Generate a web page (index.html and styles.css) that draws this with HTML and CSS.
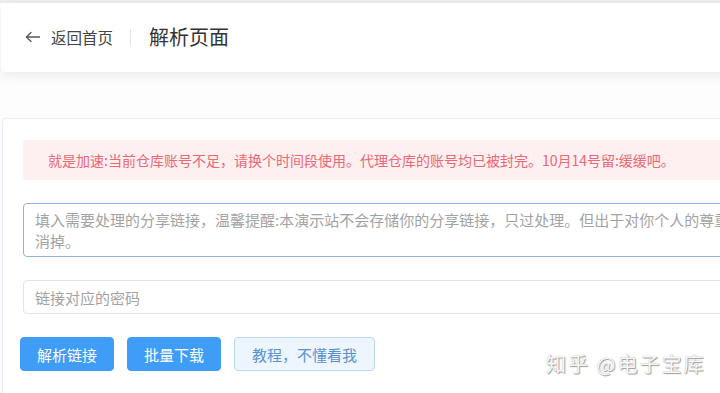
FILE: index.html
```html
<!DOCTYPE html>
<html lang="zh-CN">
<head>
<meta charset="utf-8">
<title>解析页面</title>
<link rel="stylesheet" href="styles.css">
</head>
<body>
<div class="page">
  <header class="page-header">
    <a class="back">
      <svg class="back-icon" width="16" height="16" viewBox="0 0 16 16" fill="none" stroke="#555" stroke-width="1.3" stroke-linecap="round" stroke-linejoin="round">
        <path d="M1.5 8 H14.5"/>
        <path d="M6 3.5 L1.5 8 L6 12.5"/>
      </svg>
      <span class="back-text">返回首页</span>
    </a>
    <span class="divider"></span>
    <h1 class="title">解析页面</h1>
  </header>

  <main class="card">
    <div class="alert">就是加速:当前仓库账号不足，请换个时间段使用。代理仓库的账号均已被封完。10月14号留:缓缓吧。</div>
    <textarea class="field textarea" rows="2" placeholder="填入需要处理的分享链接，温馨提醒:本演示站不会存储你的分享链接，只过处理。但出于对你个人的尊重，建议处理完成后将分享链接取&#10;消掉。"></textarea>
    <input class="field input" type="text" placeholder="链接对应的密码">
    <div class="actions">
      <button class="btn btn-primary">解析链接</button>
      <button class="btn btn-primary">批量下载</button>
      <button class="btn btn-plain">教程，不懂看我</button>
    </div>
  </main>
  <div class="watermark">知乎 @电子宝库</div>
</div>
</body>
</html>
```
FILE: styles.css
```css
html, body {
  margin: 0;
  padding: 0;
  overflow: hidden;
  background: #ffffff;
}
body {
  width: 720px;
  height: 393px;
  font-family: "Noto Sans CJK SC", "Noto Sans", sans-serif;
  color: #303133;
  position: relative;
}
.page {
  width: 1100px;
  padding-top: 3px;
  background: linear-gradient(#ececec 0, #ececec 3px, #fdfdfd 3px);
  min-height: 393px;
}
.page-header {
  margin-left: 1px;
  height: 69px;
  background: #fff;
  border-radius: 4px;
  box-shadow: 0 4px 12px rgba(0, 0, 0, 0.07);
  display: flex;
  align-items: center;
  padding-left: 24px;
}
.back {
  display: flex;
  align-items: center;
  color: #444;
  cursor: pointer;
}
.back-icon {
  display: block;
  margin-top: -2px;
}
.back-text {
  margin-left: 10px;
  font-size: 15.5px;
  line-height: 20px;
  margin-top: -1px;
}
.divider {
  width: 1px;
  height: 17px;
  background: #e2e2e2;
  margin: -1px 18px 0 17px;
}
.title {
  margin: -2px 0 0 0;
  font-size: 20px;
  font-weight: 400;
  color: #333;
  line-height: 24px;
}
.card {
  margin: 46px 0 0 2px;
  border: 1px solid #ebeef5;
  border-radius: 4px;
  background: #fff;
  padding: 21px 0 40px 17px;
  display: flex;
  flex-direction: column;
  box-shadow: 0 0 6px rgba(0, 0, 0, 0.03);
}
.alert {
  margin-left: 3px;
  height: 40px;
  display: flex;
  align-items: center;
  padding-left: 25px;
  background: #fef0f0;
  color: #ec6674;
  font-size: 14px;
  border-radius: 4px;
}
.field {
  margin-left: 3px;
  font-family: "Noto Sans CJK SC", "Noto Sans", sans-serif;
  font-size: 15px;
  color: #606266;
  background: #fff;
  border-radius: 4px;
  outline: none;
  box-sizing: border-box;
  display: block;
}
.field::placeholder {
  color: #a3a3a3;
}
.textarea {
  margin-top: 23px;
  height: 54px;
  border: 1px solid #8fb3dc;
  padding: 5px 11px;
  line-height: 21px;
  resize: none;
  overflow: hidden;
}
.input {
  margin-top: 23px;
  height: 34px;
  border: 1px solid #e0e3e8;
  padding: 0 11px;
}
.actions {
  margin-top: 23px;
  display: flex;
  gap: 13px;
}
.btn {
  height: 34px;
  padding: 0 16px;
  font-family: "Noto Sans CJK SC", "Noto Sans", sans-serif;
  font-size: 15px;
  border-radius: 4px;
  border: 1px solid transparent;
  cursor: pointer;
}
.btn-primary {
  background: #3f9cf7;
  border-color: #3f9cf7;
  color: #fff;
}
.btn-plain {
  background: #edf5ff;
  border-color: #bcd9f7;
  color: #5991d0;
  padding: 0 17px;
}
.watermark {
  position: absolute;
  left: 546px;
  top: 352px;
  font-size: 20px;
  line-height: 24px;
  color: #f7f7f7;
  letter-spacing: 2px;
  text-shadow: 1px 1px 1px #9a9a9a, 0 0 1px #b0b0b0;
  white-space: nowrap;
}
```
